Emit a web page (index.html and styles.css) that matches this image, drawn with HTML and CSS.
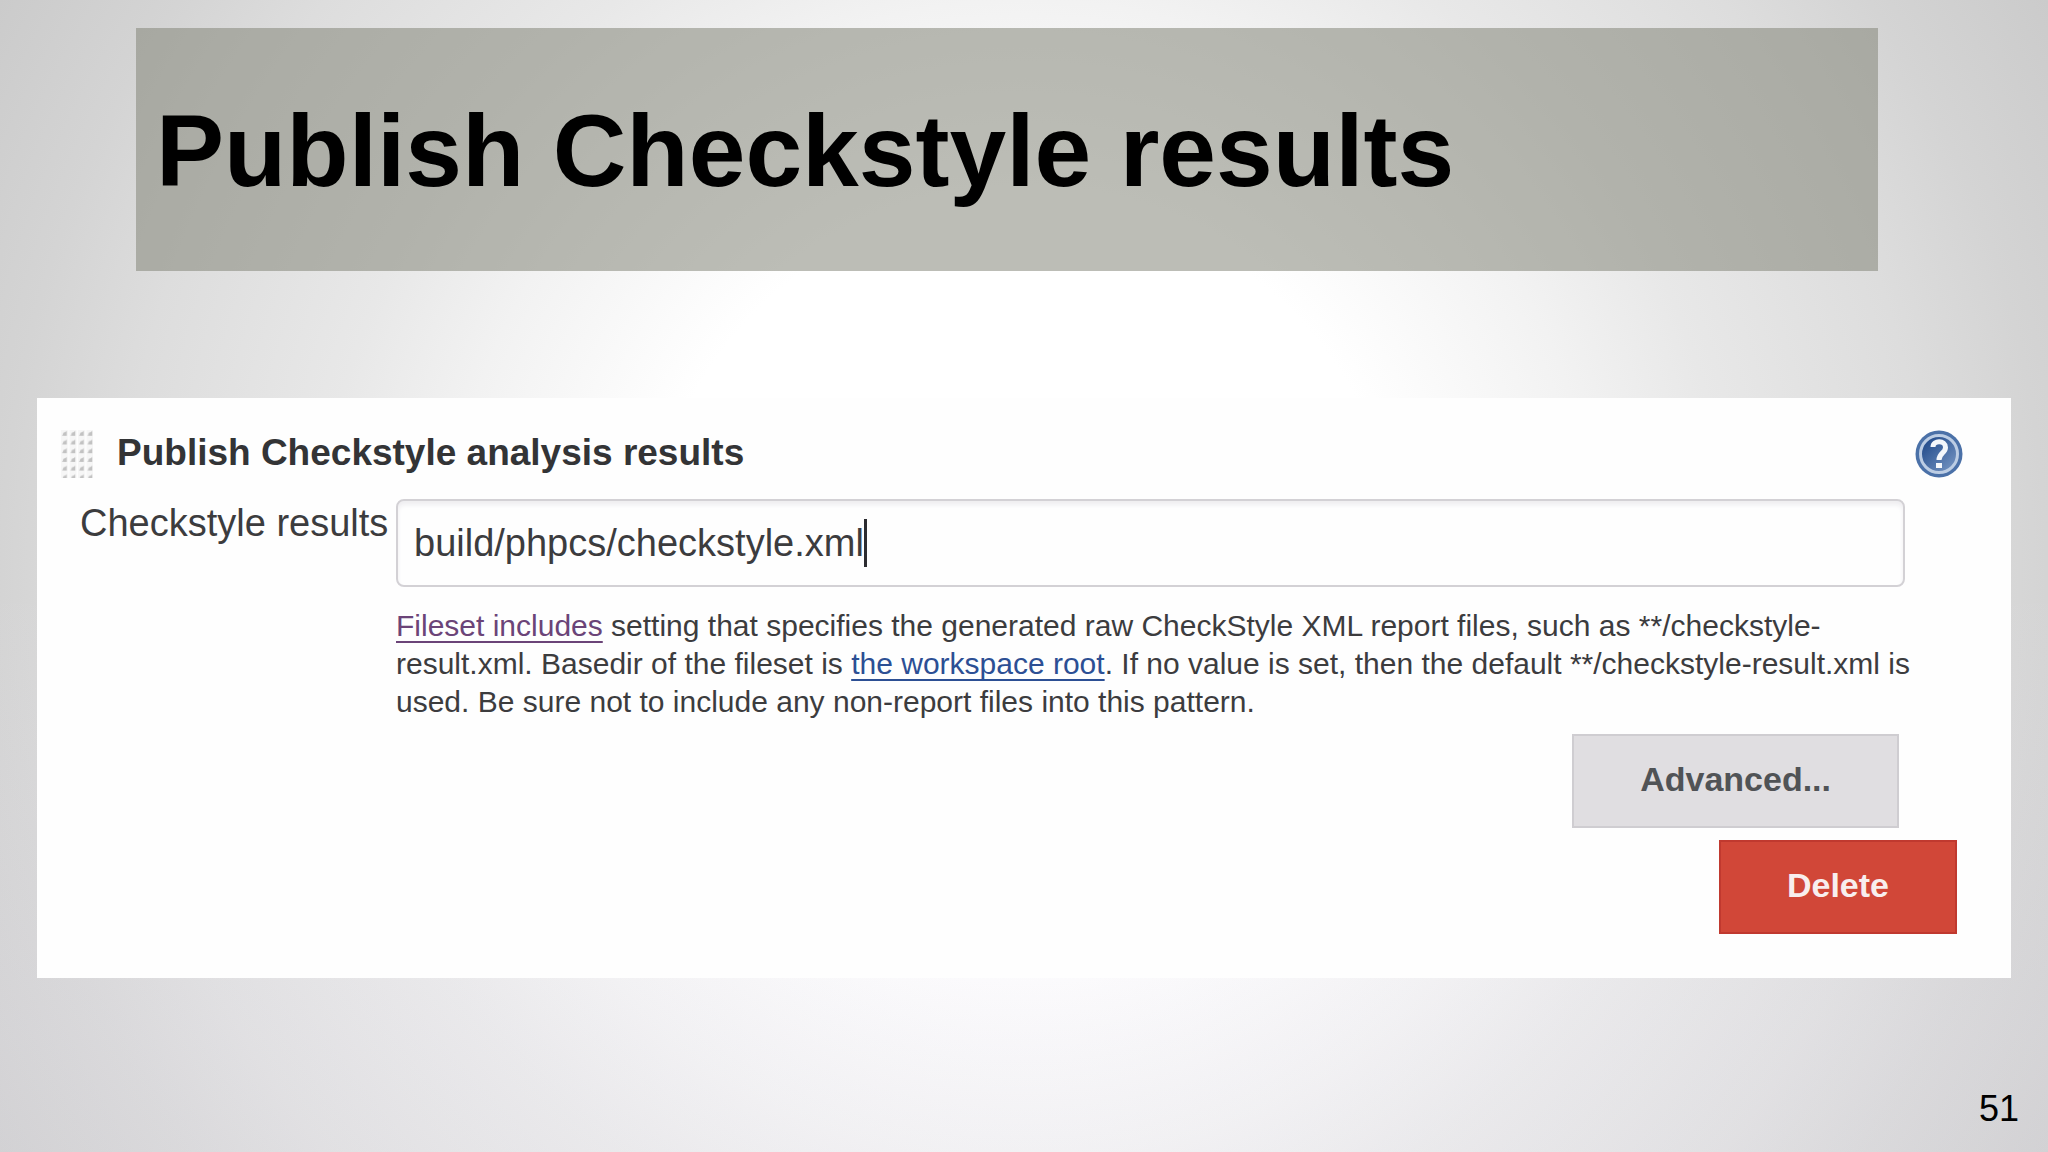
FILE: index.html
```html
<!DOCTYPE html>
<html lang="en">
<head>
<meta charset="utf-8">
<title>Publish Checkstyle results</title>
<link rel="stylesheet" href="styles.css">
</head>
<body class="slide">
<header class="banner">
  <h1 class="banner-title">Publish Checkstyle results</h1>
</header>
<main class="panel">
  <div class="panel-head">
    <svg class="grip" viewBox="0 0 32 48" aria-hidden="true">
      <defs>
        <pattern id="dots" width="8.5" height="8.7" patternUnits="userSpaceOnUse">
          <rect width="7" height="8.7" fill="#f6f6f6"/>
          <path d="M0.8 5.6 L5.8 0.8 V5.8 Z" fill="#c2c2c2"/>
          <circle cx="3.8" cy="4" r="1.8" fill="#c2c2c2"/>
        </pattern>
      </defs>
      <rect width="32" height="48" fill="url(#dots)"/>
    </svg>
    <h2 class="panel-title">Publish Checkstyle analysis results</h2>
    <button class="help" type="button" aria-label="Help">
      <svg viewBox="0 0 48 48" aria-hidden="true">
        <defs>
          <linearGradient id="disc" x1="0" y1="0" x2="1" y2="1">
            <stop offset="0.2" stop-color="#2a5290"/>
            <stop offset="1" stop-color="#7d9cc8"/>
          </linearGradient>
        </defs>
        <circle cx="24" cy="24" r="23.5" fill="#4b71a8"/>
        <circle cx="24" cy="24" r="18.5" fill="url(#disc)" stroke="#bccde4" stroke-width="3"/>
        <path d="M18 17 C18 10 30.500 10 30.500 17.500 C30.500 23 24 23 24 30" fill="none" stroke="#f4f7fb" stroke-width="5"/>
        <rect x="21" y="33" width="6" height="5" fill="#f4f7fb"/>
      </svg>
    </button>
  </div>
  <form class="entry">
    <label class="entry-label" for="results">Checkstyle results</label>
    <div class="entry-body">
      <div class="field">
        <input class="field-input" id="results" type="text" value="build/phpcs/checkstyle.xml">
        <span class="caret"></span>
      </div>
      <p class="hint"><a class="link visited" href="#fileset">Fileset includes</a> setting that specifies the generated raw CheckStyle XML report files, such as **/checkstyle-result.xml. Basedir of the fileset is <a class="link" href="#workspace">the workspace root</a>. If no value is set, then the default **/checkstyle-result.xml is used. Be sure not to include any non-report files into this pattern.</p>
      <button class="button" type="button">Advanced...</button>
    </div>
    <button class="button danger" type="button">Delete</button>
  </form>
</main>
<footer class="page-number">51</footer>
</body>
</html>
```
FILE: styles.css
```css
* {
  box-sizing: border-box;
}

.slide {
  display: flex;
  flex-direction: column;
  min-height: 100vh;
  margin: 0;
  padding: 28px 37px 0;
  font-family: "Liberation Sans", Arial, sans-serif;
  color: #3c3c3e;
  background:
    linear-gradient(rgba(240, 236, 248, 0) 50%, rgba(240, 236, 248, 0.2) 90%),
    radial-gradient(circle at center, #fff 32%, #f2f2f2 49%, #e8e8e8 60%, #dddddd 77%, #d4d4d4 87%, #cbcbcb 100%);
}

.banner {
  display: flex;
  align-items: center;
  height: 243px;
  margin: 0 133px 0 99px;
  padding: 2px 20px 0;
  background: rgba(128, 131, 118, 0.53);
}

.banner-title {
  margin: 0;
  font-size: 102px;
  line-height: 116px;
  color: #000;
}

.panel {
  margin-top: 127px;
  padding: 32px 48px 44px 24px;
  background: #fefefe;
}

.panel-head {
  display: flex;
  align-items: center;
  height: 48px;
}

.grip {
  width: 32px;
  height: 48px;
}

.panel-title {
  flex: 1;
  margin: 0 0 2px 24px;
  font-size: 37px;
  line-height: 44px;
  color: #333436;
}

.help {
  width: 48px;
  height: 48px;
  padding: 0;
  border: 0;
  background: none;
}

.help svg {
  display: block;
}

.entry {
  display: grid;
  grid-template-columns: 316px 1fr;
  margin-top: 21px;
  padding-left: 19px;
}

.entry-label {
  font-size: 38px;
  line-height: 48px;
}

.entry-body {
  display: flex;
  flex-direction: column;
  margin-right: 58px;
}

.field {
  position: relative;
}

.field-input {
  display: block;
  width: 100%;
  height: 88px;
  padding: 0 16px;
  border: 2px solid #d3d1d5;
  border-radius: 8px;
  font: inherit;
  font-size: 38px;
  color: inherit;
  background: #fefefe;
  box-shadow: inset 0 4px 4px #efeef1;
}

.caret {
  position: absolute;
  top: 20px;
  left: 468px;
  width: 3px;
  height: 48px;
  background: #2c2c30;
}

.hint {
  margin: 20px -16px 13px 0;
  font-size: 30px;
  line-height: 38px;
}

.link {
  color: #2c4f94;
  text-decoration-thickness: 2px;
  text-underline-offset: 5px;
  text-decoration-skip-ink: none;
}

.visited {
  color: #6b4478;
}

.button {
  align-self: end;
  height: 94px;
  margin-right: 6px;
  padding: 0 66px 3px;
  border: 2px solid #cfcdd1;
  font: inherit;
  font-size: 34px;
  font-weight: bold;
  color: #505356;
  background: #e0dee1;
}

.danger {
  grid-column: 2;
  justify-self: end;
  margin-top: 12px;
  border-color: #c0392f;
  color: #f8eeee;
  background: #d14738;
}

.page-number {
  margin: auto -8px 23px auto;
  font-size: 36px;
  line-height: 40px;
  color: #000;
}
```
